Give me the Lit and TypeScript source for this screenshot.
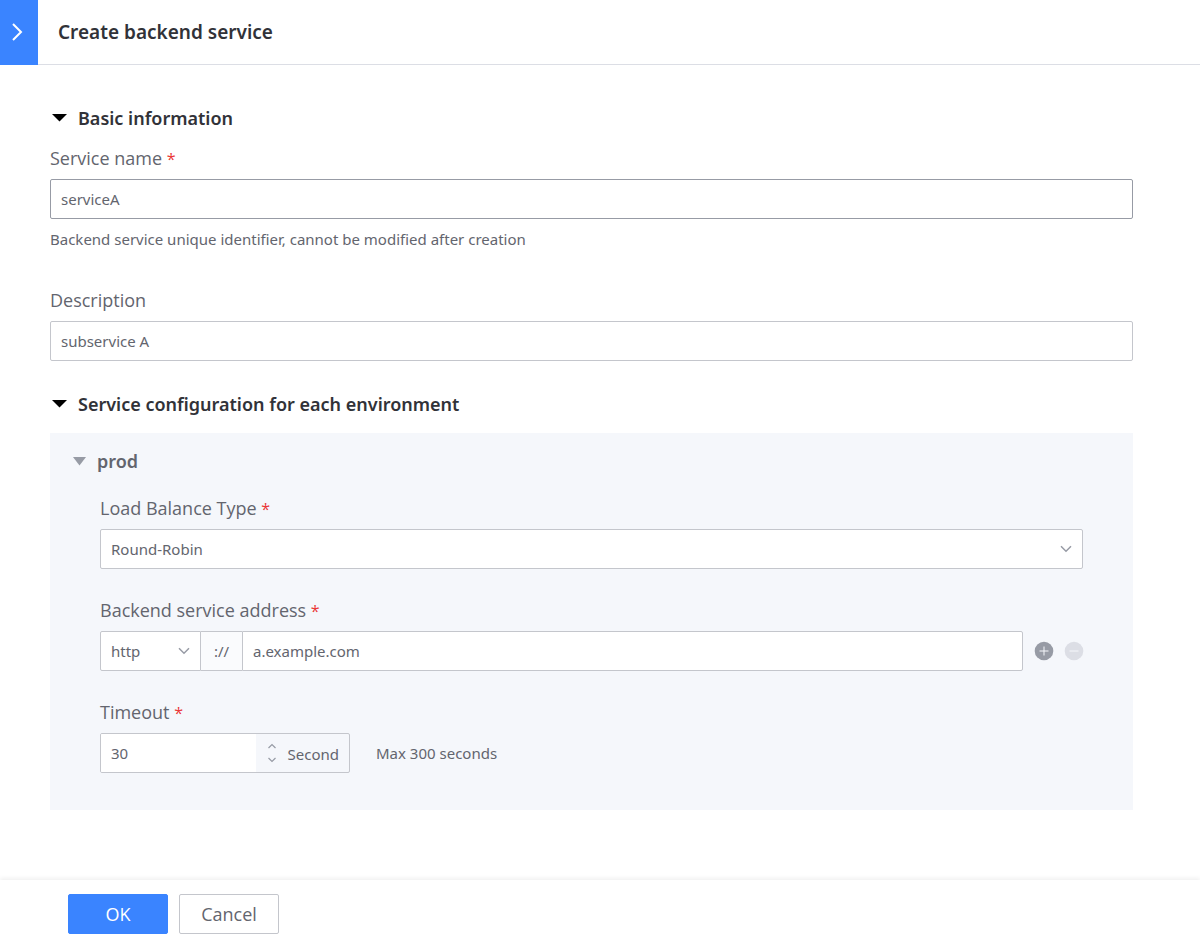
import { LitElement, html, css, svg, nothing } from "lit";
import { customElement, state } from "lit/decorators.js";

const chevronDown = html`<svg class="chevron" viewBox="0 0 12 8" aria-hidden="true">
  <path d="M1 1.2 6 6.2 11 1.2" />
</svg>`;

const triangle = svg`<path d="M0 0H15L7.500 7.500Z" />`;

@customElement("app-root")
export class AppRoot extends LitElement {
  @state() private basicOpen = true;
  @state() private configOpen = true;
  @state() private prodOpen = true;
  @state() private timeout = 30;

  static styles = css`
    :host {
      display: flex;
      flex-direction: column;
      height: 100vh;
      background: #fff;
      color: #63656e;
      font-family: "Noto Sans", "Open Sans", sans-serif;
      font-size: 15px;
      line-height: 24px;
    }
    *,
    *::before,
    *::after {
      box-sizing: border-box;
    }
    button,
    input,
    select {
      margin: 0;
      color: inherit;
      font: inherit;
    }
    button {
      padding: 0;
      border: 0;
      background: none;
      cursor: pointer;
    }
    svg {
      display: block;
      flex: none;
    }
    h1,
    h2,
    h3,
    p {
      margin: 0;
      font: inherit;
    }

    .header {
      display: flex;
      flex: none;
      height: 65px;
    }
    .close {
      display: grid;
      place-items: center;
      width: 38px;
      padding: 0 5px 2px 0;
      background: #3a84ff;
    }
    .close svg {
      width: 12px;
      height: 18px;
      fill: none;
      stroke: #fff;
      stroke-width: 2;
    }
    .title {
      flex: 1;
      display: flex;
      align-items: center;
      padding-left: 20px;
      border-bottom: 1px solid #dcdee5;
      color: #313238;
      font-size: 19px;
      font-weight: 600;
    }

    .content {
      flex: 1;
      min-height: 0;
      overflow: auto;
      padding: 39px 67px 39px 50px;
    }
    .toggle {
      display: flex;
      align-items: center;
      gap: 11px;
      padding-left: 2px;
      height: 28px;
      color: #313238;
      font-size: 18px;
      font-weight: 600;
    }
    .toggle svg {
      width: 15px;
      height: 8px;
      fill: #000;
    }
    .toggle.closed svg {
      transform: rotate(-90deg);
    }
    .section {
      padding-top: 13px;
    }
    .section + h2 {
      margin-top: 29px;
    }
    .field + .field {
      margin-top: 36px;
    }
    .label {
      display: block;
      height: 26px;
      margin-bottom: 8px;
      font-family: "Open Sans", "Noto Sans", sans-serif;
      font-size: 18px;
      line-height: 26px;
    }
    .required {
      color: #ea3636;
      font-size: 16px;
    }
    .control {
      display: block;
      width: 100%;
      height: 40px;
      padding: 0 10px;
      border: 1px solid #c4c6cc;
      border-radius: 2px;
      background: #fff;
      outline: 0;
    }
    .control.hover {
      border-color: #979ba5;
    }
    .control:focus-visible {
      border-color: #3a84ff;
    }
    .help {
      margin-top: 8px;
    }

    .panel {
      margin-top: 2px;
      padding: 14px 50px 37px;
      background: #f5f7fb;
    }
    .panel .toggle {
      margin-left: -29px;
      color: #63656e;
    }
    .panel .toggle svg {
      width: 13px;
      height: 9px;
      fill: #979ba5;
    }
    .fields {
      padding-top: 20px;
    }
    .fields .field + .field {
      margin-top: 28px;
    }
    .select {
      display: grid;
      align-items: center;
    }
    .select > * {
      grid-area: 1 / 1;
    }
    .select select {
      appearance: none;
      cursor: pointer;
    }
    .chevron {
      justify-self: end;
      width: 12px;
      height: 8px;
      margin-right: 11px;
      fill: none;
      stroke: #979ba5;
      stroke-width: 1.5;
      pointer-events: none;
    }
    .address {
      display: flex;
      align-items: center;
      gap: 12px;
    }
    .group {
      display: flex;
      flex: 1;
      min-width: 0;
    }
    .scheme {
      width: 101px;
    }
    .scheme select {
      border-radius: 2px 0 0 2px;
    }
    .sep {
      display: grid;
      place-items: center;
      width: 41px;
      border: solid #c4c6cc;
      border-width: 1px 0;
      background: #fafbfd;
    }
    .host {
      flex: 1;
      min-width: 0;
      border-radius: 0 2px 2px 0;
    }
    .round svg {
      width: 18px;
      height: 18px;
      overflow: visible;
      fill: #979ba5;
      stroke: #f5f7fb;
      stroke-width: 1;
    }
    .round circle {
      stroke: none;
    }
    .round:disabled {
      cursor: not-allowed;
    }
    .round:disabled svg {
      fill: #dcdee5;
    }

    .timeout {
      display: flex;
      align-items: center;
      gap: 26px;
    }
    .stepper {
      display: flex;
      width: 250px;
      height: 40px;
      border: 1px solid #c4c6cc;
      border-radius: 2px;
      overflow: hidden;
    }
    .stepper input {
      flex: 1;
      min-width: 0;
      padding: 0 10px;
      border: 0;
      background: #fff;
      outline: 0;
      appearance: textfield;
    }
    .stepper input::-webkit-inner-spin-button {
      appearance: none;
      margin: 0;
    }
    .steps {
      display: flex;
      flex-direction: column;
      justify-content: center;
      width: 32px;
    }
    .steps button {
      display: grid;
      place-items: center;
      height: 14px;
    }
    .steps svg {
      width: 8px;
      height: 6px;
      fill: none;
      stroke: #979ba5;
      stroke-width: 1.2;
    }
    .unit {
      padding-right: 10px;
      line-height: 40px;
    }

    .footer {
      display: flex;
      flex: none;
      gap: 11px;
      padding: 14px 68px 11px;
      background: #fff;
      box-shadow: 0 -2px 4px rgba(0, 0, 0, 0.06);
    }
    .btn {
      width: 100px;
      height: 40px;
      border: 1px solid #c4c6cc;
      border-radius: 2px;
      background: #fff;
      font-family: "Open Sans", "Noto Sans", sans-serif;
      font-size: 18px;
    }
    .btn.primary {
      border-color: #3a84ff;
      background: #3a84ff;
      color: #fff;
    }
  `;

  private toggle(label: string, open: boolean, flip: () => void) {
    return html`<button
      type="button"
      class="toggle ${open ? "" : "closed"}"
      aria-expanded=${open}
      @click=${flip}
    >
      <svg viewBox="0 0 15 8" preserveAspectRatio="none" aria-hidden="true">${triangle}</svg>${label}
    </button>`;
  }

  private step(by: number) {
    this.timeout = Math.min(300, Math.max(1, this.timeout + by));
  }

  private star() {
    return html`<span class="required">*</span>`;
  }

  private basic() {
    return html`<div class="section">
      <div class="field">
        <label class="label" for="name">Service name ${this.star()}</label>
        <input class="control hover" id="name" type="text" value="serviceA" aria-describedby="name-help" />
        <p class="help" id="name-help">Backend service unique identifier, cannot be modified after creation</p>
      </div>
      <div class="field">
        <label class="label" for="desc">Description</label>
        <input class="control" id="desc" type="text" value="subservice A" />
      </div>
    </div>`;
  }

  private prodFields() {
    return html`<div class="fields">
      <div class="field">
        <label class="label" for="lb">Load Balance Type ${this.star()}</label>
        <div class="select">
          <select class="control" id="lb">
            <option>Round-Robin</option>
          </select>
          ${chevronDown}
        </div>
      </div>
      <div class="field">
        <label class="label" for="host">Backend service address ${this.star()}</label>
        <div class="address">
          <div class="group">
            <div class="select scheme">
              <select class="control" aria-label="Scheme">
                <option>http</option>
                <option>https</option>
              </select>
              ${chevronDown}
            </div>
            <span class="sep">://</span>
            <input class="control host" id="host" type="text" value="a.example.com" />
          </div>
          <button type="button" class="round" aria-label="Add address">
            <svg viewBox="0 0 18 18"><circle cx="9" cy="9" r="9.300" /><path d="M4.500 9H13.500M9 4.500V13.500" /></svg>
          </button>
          <button type="button" class="round" aria-label="Remove address" disabled>
            <svg viewBox="0 0 18 18"><circle cx="9" cy="9" r="9.300" /><path d="M4.500 9H13.500" /></svg>
          </button>
        </div>
      </div>
      <div class="field">
        <label class="label" for="timeout">Timeout ${this.star()}</label>
        <div class="timeout">
          <div class="stepper">
            <input id="timeout" type="number" min="1" max="300" .value=${String(this.timeout)}
              @change=${(e: Event) => (this.timeout = Number((e.target as HTMLInputElement).value))} />
            <div class="steps">
              <button type="button" aria-label="Increase" @click=${() => this.step(1)}>
                <svg viewBox="0 0 8 6"><path d="M.5 5 4 1.500 7.500 5" /></svg>
              </button>
              <button type="button" aria-label="Decrease" @click=${() => this.step(-1)}>
                <svg viewBox="0 0 8 6"><path d="M.5 1 4 4.500 7.500 1" /></svg>
              </button>
            </div>
            <span class="unit">Second</span>
          </div>
          <span>Max 300 seconds</span>
        </div>
      </div>
    </div>`;
  }

  render() {
    return html`
      <header class="header">
        <button type="button" class="close" aria-label="Close">
          <svg viewBox="0 0 12 18"><path d="M2 1 10 9 2 17" /></svg>
        </button>
        <h1 class="title">Create backend service</h1>
      </header>
      <main class="content">
        <h2>${this.toggle("Basic information", this.basicOpen, () => (this.basicOpen = !this.basicOpen))}</h2>
        ${this.basicOpen ? this.basic() : nothing}
        <h2>
          ${this.toggle("Service configuration for each environment", this.configOpen, () => (this.configOpen = !this.configOpen))}
        </h2>
        ${this.configOpen
          ? html`<div class="section">
              <div class="panel">
                <h3>${this.toggle("prod", this.prodOpen, () => (this.prodOpen = !this.prodOpen))}</h3>
                ${this.prodOpen ? this.prodFields() : nothing}
              </div>
            </div>`
          : nothing}
      </main>
      <footer class="footer">
        <button type="button" class="btn primary">OK</button>
        <button type="button" class="btn">Cancel</button>
      </footer>
    `;
  }
}
